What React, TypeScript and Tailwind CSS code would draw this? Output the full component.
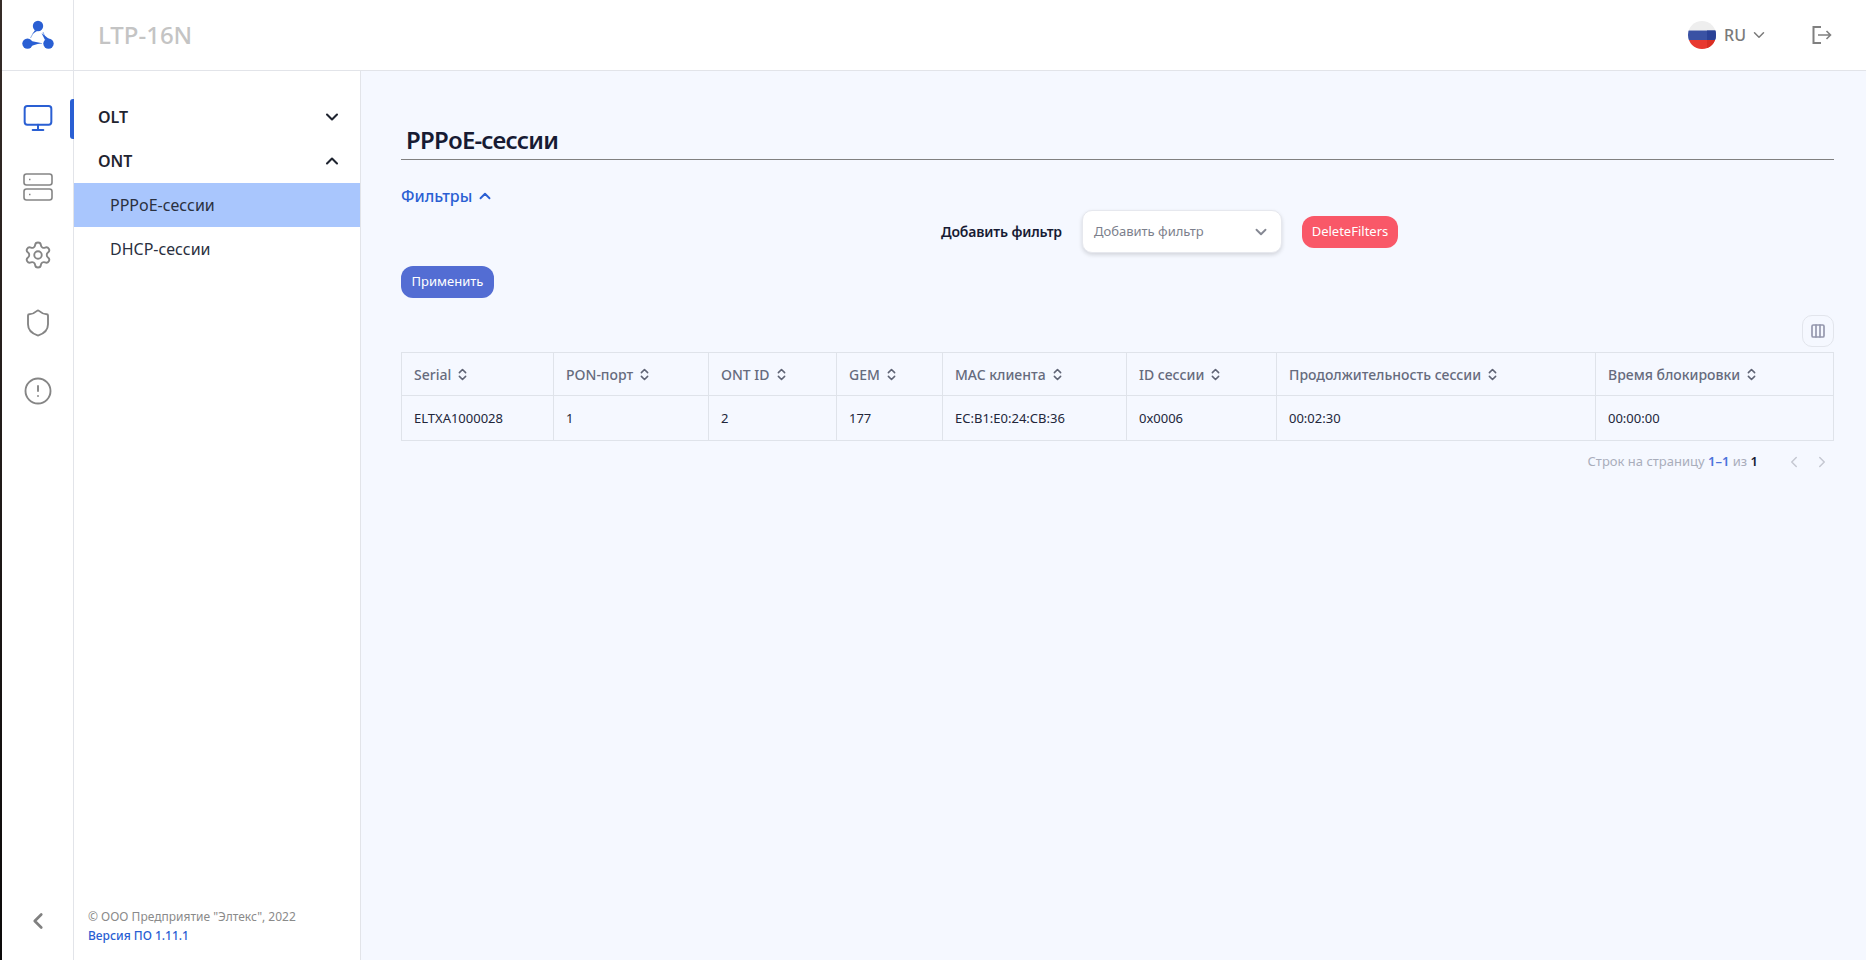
import {
  ChevronDown,
  ChevronLeft,
  ChevronRight,
  ChevronUp,
  ChevronsUpDown,
  Columns3,
  Monitor,
  Settings,
  Shield,
  CircleAlert,
} from "lucide-react";

const columns = [
  { title: "Serial", value: "ELTXA1000028", width: "w-[152px]" },
  { title: "PON-порт", value: "1", width: "w-[155px]" },
  { title: "ONT ID", value: "2", width: "w-[128px]" },
  { title: "GEM", value: "177", width: "w-[106px]" },
  { title: "MAC клиента", value: "EC:B1:E0:24:CB:36", width: "w-[184px]" },
  { title: "ID сессии", value: "0x0006", width: "w-[150px]" },
  { title: "Продолжительность сессии", value: "00:02:30", width: "w-[319px]" },
  { title: "Время блокировки", value: "00:00:00", width: "flex-1" },
];

function Logo() {
  return (
    <svg width="32" height="30" viewBox="0 0 32 30" fill="none">
      <path d="M11.5 12.5 L8.5 18 M21 12 L23 17 M11 23.5 H20" stroke="#8fb0ea" strokeWidth="1" />
      <circle cx="16" cy="6" r="5.2" fill="#2a5fd3" />
      <circle cx="5.5" cy="23.6" r="5.2" fill="#2a5fd3" />
      <circle cx="26.5" cy="23.6" r="5.2" fill="#2a5fd3" />
      <path d="M13 10 L10.5 14 L15 11 Z" fill="#2a5fd3" />
      <path d="M9 21 L19 23 L9 26 Z" fill="#2a5fd3" />
      <path d="M23 20 L19.5 13 L27 19 Z" fill="#2a5fd3" />
    </svg>
  );
}

function ServerIcon() {
  return (
    <svg width="30" height="30" viewBox="0 0 30 30" fill="none" stroke="#858585" strokeWidth="1.6">
      <rect x="1" y="2" width="28" height="11" rx="2.5" />
      <rect x="1" y="17" width="28" height="11" rx="2.5" />
      <path d="M6 7.5h1.5M6 22.5h1.5" />
    </svg>
  );
}

function LogoutIcon() {
  return (
    <svg width="20" height="18" viewBox="0 0 20 18" fill="none" stroke="#808080" className="ml-[44px]">
      <path d="M9 1H1.5v16H9" strokeWidth="2" />
      <path d="M6 9h12.5M14.5 5l4 4-4 4" strokeWidth="1.6" />
    </svg>
  );
}

function RuFlag() {
  return (
    <svg width="28" height="28" viewBox="0 0 28 28">
      <defs>
        <clipPath id="flag-circle">
          <circle cx="14" cy="14" r="14" />
        </clipPath>
      </defs>
      <g clipPath="url(#flag-circle)">
        <rect width="28" height="9.5" fill="#eeeeee" />
        <rect y="9.5" width="28" height="9.5" fill="#3a52a4" />
        <rect y="19" width="28" height="9" fill="#e8382f" />
        <rect x="19" y="9.5" width="9" height="9.5" fill="#2a4297" />
        <rect x="19" y="19" width="9" height="9" fill="#d92f24" />
      </g>
    </svg>
  );
}

function Rail() {
  return (
    <div className="w-[72px] shrink-0 flex flex-col items-center bg-white border-r border-[#e2e4e9] relative">
      <div className="absolute left-[68px] top-[28px] w-[4px] h-[40px] bg-[#2a5fd3] rounded-l-[3px]" />
      <div className="flex flex-col items-center gap-[38px] pt-[31px]">
        <Monitor size={32} strokeWidth={1.5} color="#2a5fd3" />
        <ServerIcon />
        <Settings size={30} strokeWidth={1.5} color="#858585" />
        <Shield size={30} strokeWidth={1.5} color="#858585" />
        <CircleAlert size={30} strokeWidth={1.5} color="#858585" />
      </div>
      <div className="mt-auto mb-[26px]">
        <ChevronLeft size={26} strokeWidth={2.5} color="#808080" />
      </div>
    </div>
  );
}

function Sidebar() {
  return (
    <div className="w-[287px] shrink-0 flex flex-col bg-white border-r border-[#e2e4e9] pt-[24px]">
      <div className="h-[44px] flex items-center justify-between pl-[24px] pr-[18px] text-[16px] font-semibold text-[#1f2430]">
        OLT
        <ChevronDown size={20} strokeWidth={2.5} color="#1f2430" />
      </div>
      <div className="h-[44px] flex items-center justify-between pl-[24px] pr-[18px] text-[16px] font-semibold text-[#1f2430]">
        ONT
        <ChevronUp size={20} strokeWidth={2.5} color="#1f2430" />
      </div>
      <div className="h-[44px] flex items-center pl-[36px] text-[16px] text-[#2a3040] bg-[#a9c6fd]">PPPoE-сессии</div>
      <div className="h-[44px] flex items-center pl-[36px] text-[16px] text-[#2a3040]">DHCP-сессии</div>
      <div className="mt-auto pl-[14px] pb-[15px] text-[12px] leading-[19px]">
        <div className="text-[#8a8a8a]">© ООО Предприятие "Элтекс", 2022</div>
        <div className="text-[#2a5fd3] font-medium">Версия ПО 1.11.1</div>
      </div>
    </div>
  );
}

function SessionsTable() {
  return (
    <div className="border border-[#dfe3ea] text-[14px]">
      <div className="flex h-[43px] border-b border-[#dfe3ea]">
        {columns.map((c, i) => (
          <div
            key={c.title}
            className={`${c.width} ${i < columns.length - 1 ? "border-r border-[#dfe3ea]" : ""} shrink-0 flex items-center gap-[4px] pl-[12px] text-[#666b7d] font-medium`}
          >
            {c.title}
            <ChevronsUpDown size={15} strokeWidth={2.5} color="#5f6475" />
          </div>
        ))}
      </div>
      <div className="flex h-[44px]">
        {columns.map((c, i) => (
          <div
            key={c.title}
            className={`${c.width} ${i < columns.length - 1 ? "border-r border-[#dfe3ea]" : ""} shrink-0 flex items-center pl-[12px] pt-[2px] text-[13px] text-[#22263a]`}
          >
            {c.value}
          </div>
        ))}
      </div>
    </div>
  );
}

export default function App() {
  return (
    <div
      className="h-[960px] w-full flex overflow-hidden bg-[#f5f8ff]"
      style={{ fontFamily: '"Noto Sans", "Open Sans", sans-serif' }}
    >
      <div className="w-[2px] shrink-0 bg-gradient-to-b from-[#362c28] to-[#0c0a0a]" />
      <div className="flex-1 flex flex-col min-w-0">
        <header className="h-[71px] shrink-0 flex bg-white border-b border-[#e2e4e9]">
          <div className="w-[72px] shrink-0 flex items-center justify-center border-r border-[#e2e4e9]">
            <Logo />
          </div>
          <div className="pl-[24px] flex items-center text-[24px] font-medium text-[#c4c4c4]">LTP-16N</div>
          <div className="ml-auto flex items-center pr-[34px]">
            <RuFlag />
            <span className="ml-[8px] text-[16px] font-medium text-[#7a7a7a]">RU</span>
            <ChevronDown size={18} strokeWidth={2} color="#7a7a7a" className="ml-[4px]" />
            <LogoutIcon />
          </div>
        </header>
        <div className="flex-1 flex min-h-0">
          <Rail />
          <Sidebar />
          <main className="flex-1 min-w-0 pl-[40px] pr-[32px]">
            <div className="mt-[50px] h-[39px] pl-[5px] flex items-center border-b border-[#808080] text-[24px] font-semibold tracking-[-0.8px] text-[#171b33]">
              PPPoE-сессии
            </div>
            <div className="mt-[24px] flex items-center gap-[4px] text-[16px] font-medium text-[#2a5fd3]">
              Фильтры
              <ChevronUp size={18} strokeWidth={2.5} color="#2a5fd3" />
            </div>
            <div className="mt-[2px] flex items-center pl-[540px]">
              <span className="text-[14px] font-semibold tracking-[-0.15px] text-[#171b33]">Добавить фильтр</span>
              <div className="ml-[20px] w-[200px] h-[43px] flex items-center justify-between px-[11px] bg-white rounded-[10px] border border-[#e6e8ee] shadow-[0_2px_4px_rgba(0,0,0,0.14)] text-[13px] text-[#7c7f8c]">
                Добавить фильтр
                <ChevronDown size={18} strokeWidth={2.5} color="#858893" />
              </div>
              <button className="ml-[20px] w-[96px] h-[32px] bg-[#f95868] rounded-[12px] text-[13px] text-white">
                DeleteFilters
              </button>
            </div>
            <button className="mt-[13px] block w-[93px] h-[32px] bg-[#536dd3] rounded-[12px] text-[13px] text-white">
              Применить
            </button>
            <div className="mt-[17px] flex justify-end">
              <div className="w-[32px] h-[32px] flex items-center justify-center rounded-[10px] border border-[#e2e5ec]">
                <Columns3 size={16} strokeWidth={2.5} color="#9497ad" />
              </div>
            </div>
            <div className="mt-[5px]">
              <SessionsTable />
            </div>
            <div className="mt-[11px] flex items-center justify-end text-[13px] text-[#a9adbb] pr-[3px]">
              <span>
                Строк на страницу <span className="font-semibold text-[#4a72dc]">1–1</span> из{" "}
                <span className="font-semibold text-[#171b33]">1</span>
              </span>
              <ChevronLeft size={18} strokeWidth={2} color="#c5c8d2" className="ml-[27px]" />
              <ChevronRight size={18} strokeWidth={2} color="#c5c8d2" className="ml-[10px]" />
            </div>
          </main>
        </div>
      </div>
    </div>
  );
}
